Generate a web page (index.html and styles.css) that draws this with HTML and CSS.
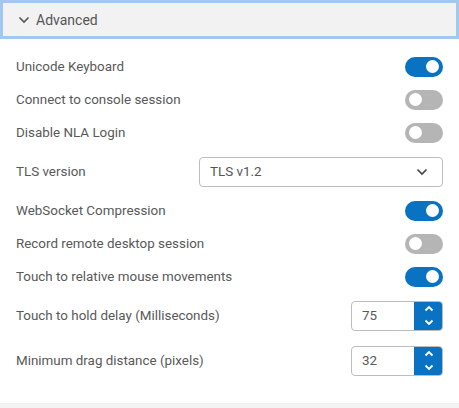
FILE: index.html
```html
<!DOCTYPE html>
<html>
<head>
<meta charset="utf-8">
<link rel="stylesheet" href="styles.css">
</head>
<body>
<div class="panel">
  <div class="header">
    <svg class="hchev" width="12" height="8" viewBox="0 0 12 8"><path d="M1.5 1.5 L6 6 L10.5 1.5" fill="none" stroke="#555" stroke-width="1.6"/></svg>
    <span>Advanced</span>
  </div>
  <div class="body">
    <div class="row"><span class="label">Unicode Keyboard</span><span class="toggle on"><span class="knob"></span></span></div>
    <div class="row"><span class="label">Connect to console session</span><span class="toggle"><span class="knob"></span></span></div>
    <div class="row"><span class="label">Disable NLA Login</span><span class="toggle"><span class="knob"></span></span></div>
    <div class="row row-select"><span class="label">TLS version</span>
      <div class="select"><span>TLS v1.2</span>
        <svg width="12" height="8" viewBox="0 0 12 8"><path d="M1.5 1.5 L6 6 L10.5 1.5" fill="none" stroke="#444" stroke-width="1.6"/></svg>
      </div>
    </div>
    <div class="row"><span class="label">WebSocket Compression</span><span class="toggle on"><span class="knob"></span></span></div>
    <div class="row"><span class="label">Record remote desktop session</span><span class="toggle"><span class="knob"></span></span></div>
    <div class="row"><span class="label">Touch to relative mouse movements</span><span class="toggle on"><span class="knob"></span></span></div>
    <div class="row row-num"><span class="label">Touch to hold delay (Milliseconds)</span>
      <div class="num"><span class="val">75</span><span class="spin">
        <svg width="10" height="7" viewBox="0 0 10 7"><path d="M1.5 5.5 L5 2 L8.5 5.5" fill="none" stroke="#fff" stroke-width="1.8"/></svg>
        <svg width="10" height="7" viewBox="0 0 10 7"><path d="M1.5 1.5 L5 5 L8.5 1.5" fill="none" stroke="#fff" stroke-width="1.8"/></svg>
      </span></div>
    </div>
    <div class="row row-num"><span class="label">Minimum drag distance (pixels)</span>
      <div class="num"><span class="val">32</span><span class="spin">
        <svg width="10" height="7" viewBox="0 0 10 7"><path d="M1.5 5.5 L5 2 L8.5 5.5" fill="none" stroke="#fff" stroke-width="1.8"/></svg>
        <svg width="10" height="7" viewBox="0 0 10 7"><path d="M1.5 1.5 L5 5 L8.5 1.5" fill="none" stroke="#fff" stroke-width="1.8"/></svg>
      </span></div>
    </div>
  </div>
  <div class="footer"></div>
</div>
</body>
</html>
```
FILE: styles.css
```css
* { box-sizing: border-box; }
html, body { margin: 0; padding: 0; background: #fff; }
body { font-family: Roboto, "Liberation Sans", sans-serif; color: #595959; font-size: 13.4px; }
.panel { width: 459px; height: 408px; display: flex; flex-direction: column; }
.header {
  height: 39px;
  background: #f2f2f2;
  border: 3px solid #a3c8f0;
  display: flex;
  align-items: center;
  padding-left: 15px;
  gap: 6px;
  font-size: 14px;
  color: #555;
}
.hchev { margin-top: 1px; }
.body { flex: 1; padding: 11px 16px 0 16px; }
.row { height: 33px; display: flex; align-items: center; justify-content: space-between; }
.row-select { height: 45px; }
.row-num { height: 45px; }
.label { color: #595959; }
.toggle {
  width: 38px; height: 20px; border-radius: 10px;
  background: #b5b5b5; position: relative; display: block;
}
.toggle.on { background: #0a72c2; }
.knob {
  position: absolute; top: 3.5px; left: 4px;
  width: 13px; height: 13px; border-radius: 50%; background: #fff;
}
.toggle.on .knob { left: 21px; }
.select {
  width: 244px; height: 30px;
  border: 1px solid #bdbdbd; border-radius: 4px;
  display: flex; align-items: center; justify-content: space-between;
  padding: 0 14px 0 10px; color: #555; font-size: 13.4px;
}
.num {
  width: 92px; height: 30px; display: flex;
  border: 1px solid #bdbdbd; border-radius: 4px; overflow: hidden;
}
.val { flex: 1; display: flex; align-items: center; padding-left: 10px; }
.spin {
  width: 29px; background: #0a72c2; display: flex; flex-direction: column;
  align-items: center; justify-content: center; gap: 7px;
  margin: -1px -1px -1px 0;
}
.footer { height: 5px; background: #f2f2f2; }
```
